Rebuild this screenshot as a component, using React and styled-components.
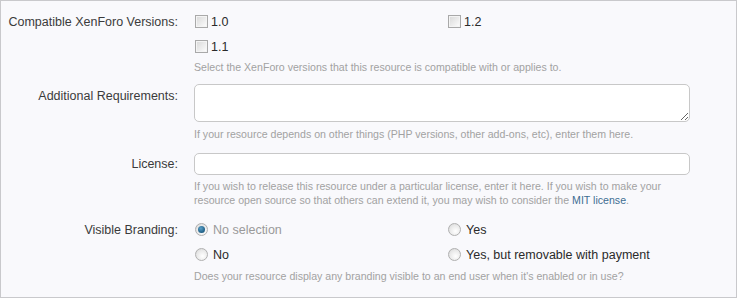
import React from "react"
import styled, { createGlobalStyle } from "styled-components"

const GlobalStyle = createGlobalStyle`
  html, body {
    margin: 0;
    padding: 0;
    background: #ffffff;
  }
  body {
    font-family: "Liberation Sans", Arial, sans-serif;
  }
`

const Frame = styled.div`
  box-sizing: border-box;
  width: 737px;
  height: 298px;
  border: 1px solid #c9c9cc;
  background: #f9f9fc;
  padding-top: 8px;
  overflow: hidden;
`

const Row = styled.div`
  display: grid;
  grid-template-columns: 177px 496px;
  column-gap: 16px;
  margin-bottom: ${(p) => p.gap || 0}px;
`

const Label = styled.div`
  text-align: right;
  font-size: 12.5px;
  line-height: 18px;
  color: #3b3b3b;
  padding-top: ${(p) => p.top || 0}px;
`

const Options = styled.div`
  display: grid;
  grid-template-columns: 253px 243px;
`

const Option = styled.label`
  display: flex;
  align-items: center;
  height: 25px;
  font-size: 12.5px;
  color: ${(p) => (p.muted ? "#9a9a9a" : "#2a2a2a")};
  grid-column: ${(p) => p.col || "auto"};
  grid-row: ${(p) => p.row || "auto"};
`

const Box = styled.span`
  box-sizing: border-box;
  width: 13px;
  height: 13px;
  margin-left: 1px;
  margin-right: 3px;
  border: 1px solid #a9a9a9;
  background: linear-gradient(135deg, #d8d8d8 0%, #f2f2f2 70%, #ffffff 100%);
  box-shadow: inset 0 0 0 1px #f4f4f4;
`

const Radio = styled.span`
  box-sizing: border-box;
  position: relative;
  width: 13px;
  height: 13px;
  margin-left: 1px;
  margin-right: 5px;
  border-radius: 50%;
  border: 1px solid #b0b0b0;
  background: radial-gradient(circle at 60% 65%, #ffffff 0%, #e8e8e8 60%, #d0d0d0 100%);

  &::after {
    content: "";
    display: ${(p) => (p.checked ? "block" : "none")};
    position: absolute;
    left: 2px;
    top: 2px;
    width: 7px;
    height: 7px;
    border-radius: 50%;
    background: radial-gradient(circle at 40% 35%, #5aa0c8 0%, #1f5e85 70%, #17445f 100%);
  }
`

const Hint = styled.div`
  font-size: 10.6px;
  line-height: 14px;
  color: #a2a2a2;
  margin-top: ${(p) => p.top || 0}px;
`

const Link = styled.a`
  color: #3d6d92;
  text-decoration: none;
`

const TextArea = styled.textarea`
  display: block;
  box-sizing: border-box;
  width: 496px;
  height: 38px;
  margin: 0;
  border: 1px solid #c8c8c8;
  border-radius: 5px;
  background: #ffffff;
  resize: vertical;
  font-family: "Liberation Sans", Arial, sans-serif;
  font-size: 13px;
  outline: none;
`

const TextInput = styled.input`
  display: block;
  box-sizing: border-box;
  width: 496px;
  height: 22px;
  margin: 0;
  border: 1px solid #c8c8c8;
  border-radius: 5px;
  background: #ffffff;
  font-family: "Liberation Sans", Arial, sans-serif;
  font-size: 13px;
  outline: none;
`

const App = () => (
  <>
    <GlobalStyle />
    <Frame>
      <Row gap={10}>
        <Label top={4}>Compatible XenForo Versions:</Label>
        <div>
          <Options>
            <Option col="1" row="1">
              <Box />
              1.0
            </Option>
            <Option col="1" row="2">
              <Box />
              1.1
            </Option>
            <Option col="2" row="1">
              <Box />
              1.2
            </Option>
          </Options>
          <Hint top={1}>
            Select the XenForo versions that this resource is compatible with or applies to.
          </Hint>
        </div>
      </Row>

      <Row gap={12}>
        <Label top={3}>Additional Requirements:</Label>
        <div>
          <TextArea />
          <Hint top={5}>
            If your resource depends on other things (PHP versions, other add-ons, etc), enter them here.
          </Hint>
        </div>
      </Row>

      <Row gap={10}>
        <Label top={2}>License:</Label>
        <div>
          <TextInput type="text" />
          <Hint top={4}>
            If you wish to release this resource under a particular license, enter it here. If you wish to make your
            resource open source so that others can extend it, you may wish to consider the{" "}
            <Link href="#mit">MIT license</Link>.
          </Hint>
        </div>
      </Row>

      <Row>
        <Label top={4}>Visible Branding:</Label>
        <div>
          <Options>
            <Option muted>
              <Radio checked />
              No selection
            </Option>
            <Option>
              <Radio />
              Yes
            </Option>
            <Option>
              <Radio />
              No
            </Option>
            <Option>
              <Radio />
              Yes, but removable with payment
            </Option>
          </Options>
          <Hint top={2}>
            Does your resource display any branding visible to an end user when it's enabled or in use?
          </Hint>
        </div>
      </Row>
    </Frame>
  </>
)

export default App
